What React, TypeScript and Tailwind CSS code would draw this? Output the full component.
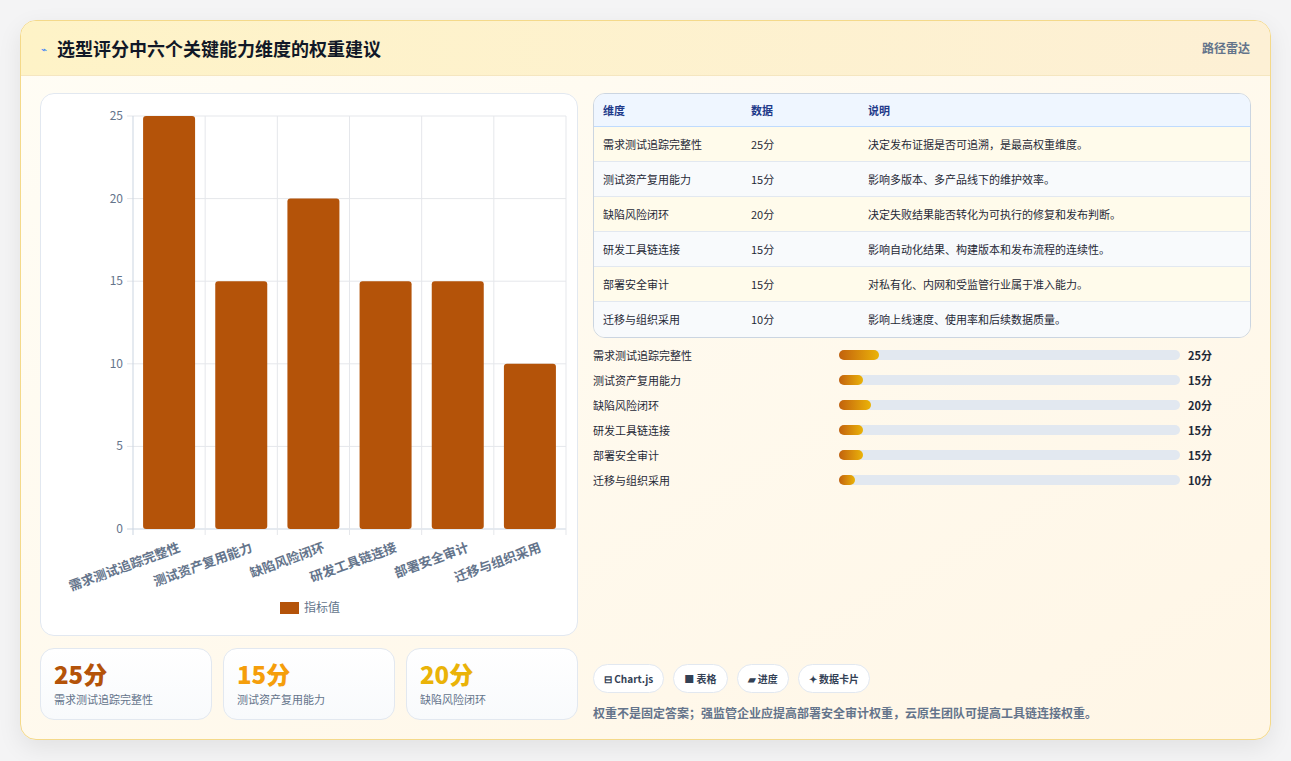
import React from "react";

const rows = [
  ["需求测试追踪完整性", 25, "决定发布证据是否可追溯，是最高权重维度。"],
  ["测试资产复用能力", 15, "影响多版本、多产品线下的维护效率。"],
  ["缺陷风险闭环", 20, "决定失败结果能否转化为可执行的修复和发布判断。"],
  ["研发工具链连接", 15, "影响自动化结果、构建版本和发布流程的连续性。"],
  ["部署安全审计", 15, "对私有化、内网和受监管行业属于准入能力。"],
  ["迁移与组织采用", 10, "影响上线速度、使用率和后续数据质量。"],
] as const;

function Chart() {
  const x0 = 92, x1 = 525, yTop = 22, yBot = 435;
  const cw = (x1 - x0) / 6;
  const sy = (yBot - yTop) / 25;
  return (
    <svg width="538" height="543" className="block">
      {[0, 5, 10, 15, 20, 25].map((v) => {
        const y = yBot - v * sy;
        return (
          <g key={v}>
            <line x1={x0 - 6} x2={x1} y1={y} y2={y} stroke={v === 0 ? "#cbd5e1" : "#e5e7eb"} />
            <text x={x0 - 10} y={y + 4} textAnchor="end" fontSize="12" fill="#64748b">{v}</text>
          </g>
        );
      })}
      {Array.from({ length: 7 }).map((_, i) => (
        <line key={i} x1={x0 + i * cw} x2={x0 + i * cw} y1={yTop} y2={yBot + 6} stroke={i === 0 ? "#cbd5e1" : "#e5e7eb"} />
      ))}
      {rows.map(([n, v], i) => {
        const cx = x0 + cw * i + cw / 2;
        return (
          <g key={n}>
            <rect x={cx - 26} y={yBot - v * sy} width={52} height={v * sy} rx="3" fill="#b45309" />
            <text x={cx + 12} y={yBot + 22} textAnchor="end" fontSize="13" fontWeight="600" fill="#64748b" transform={`rotate(-20 ${cx + 12} ${yBot + 22})`}>{n}</text>
          </g>
        );
      })}
      <rect x="239" y="508" width="19" height="12" fill="#b45309" />
      <text x="263" y="518" fontSize="12" fill="#64748b">指标值</text>
    </svg>
  );
}

export default function App() {
  return (
    <div className="w-[1291px] h-[761px] bg-[#f4f4f5] pt-[20px] px-[20px]" style={{ fontFamily: '"Noto Sans CJK SC", "Noto Sans", sans-serif' }}>
      <div className="h-[720px] rounded-[16px] border border-[#f4d98a] bg-gradient-to-br from-[#fffdf5] to-[#fff6e6] shadow-[0_8px_24px_rgba(0,0,0,0.08)] overflow-hidden flex flex-col">
        <div className="h-[55px] shrink-0 flex items-center justify-between px-[20px] bg-gradient-to-r from-[#fef3c7] to-[#fdf0d5] border-b border-[#f5e6c0]">
          <div className="flex items-center gap-[10px]">
            <span className="text-[#3b82f6] text-[10px]">⌁</span>
            <span className="text-[18px] font-bold text-[#111827]">选型评分中六个关键能力维度的权重建议</span>
          </div>
          <span className="text-[12px] font-semibold text-[#64748b]">路径雷达</span>
        </div>
        <div className="flex-1 flex gap-[15px] px-[19px] pt-[17px] pb-[18px]">
          <div className="w-[538px] flex flex-col gap-[12px]">
            <div className="h-[543px] bg-white rounded-[14px] border border-[#e2e8f0]">
              <Chart />
            </div>
            <div className="flex gap-[11px]">
              {[["25分", "需求测试追踪完整性", "text-[#b45309]"], ["15分", "测试资产复用能力", "text-[#f59e0b]"], ["20分", "缺陷风险闭环", "text-[#eab308]"]].map(([v, l, c]) => (
                <div key={l} className="w-[172px] h-[72px] rounded-[14px] border border-[#e2e8f0] bg-gradient-to-b from-white to-[#f8fafc] px-[13px] pt-[10px]">
                  <div className={`text-[24px] font-extrabold leading-[30px] ${c}`}>{v}</div>
                  <div className="text-[11px] text-[#64748b] mt-[2px]">{l}</div>
                </div>
              ))}
            </div>
          </div>
          <div className="flex-1 flex flex-col">
            <div className="rounded-[12px] border border-[#cbd5e1] overflow-hidden text-[11px]">
              <div className="flex h-[33px] items-center bg-[#eff6ff] border-b border-[#bfdbfe] font-semibold text-[#1e3a8a]">
                <div className="w-[157px] pl-[9px]">维度</div>
                <div className="w-[117px]">数据</div>
                <div>说明</div>
              </div>
              {rows.map(([n, v, d], i) => (
                <div key={n} className={`flex h-[35px] items-center text-[#1f2937] ${i < 5 ? "border-b border-[#e2e8f0]" : ""} ${i % 2 ? "bg-[#f8fafc]" : "bg-[#fffbeb]"}`}>
                  <div className="w-[157px] pl-[9px]">{n}</div>
                  <div className="w-[117px]">{v}分</div>
                  <div>{d}</div>
                </div>
              ))}
            </div>
            <div className="mt-[9px] flex flex-col gap-[9px]">
              {rows.map(([n, v]) => (
                <div key={n} className="flex items-center h-[16px] text-[11px]">
                  <div className="w-[246px] text-[#1f2937]">{n}</div>
                  <div className="w-[341px] h-[10px] rounded-full bg-[#e2e8f0]">
                    <div className="h-full rounded-full bg-gradient-to-r from-[#c2610c] to-[#eab308]" style={{ width: v * 1.6 }} />
                  </div>
                  <div className="ml-[8px] font-bold text-[#1f2937]">{v}分</div>
                </div>
              ))}
            </div>
            <div className="mt-auto flex gap-[9px] text-[10px] font-semibold text-[#334155]">
              {["⊟ Chart.js", "■ 表格", "▰ 进度", "✦ 数据卡片"].map((t) => (
                <span key={t} className="h-[29px] px-[10px] flex items-center rounded-full border border-[#e2e8f0] bg-white">{t}</span>
              ))}
            </div>
            <div className="mt-[12px] text-[12px] font-semibold text-[#64748b] leading-[16px]">权重不是固定答案；强监管企业应提高部署安全审计权重，云原生团队可提高工具链连接权重。</div>
          </div>
        </div>
      </div>
    </div>
  );
}
